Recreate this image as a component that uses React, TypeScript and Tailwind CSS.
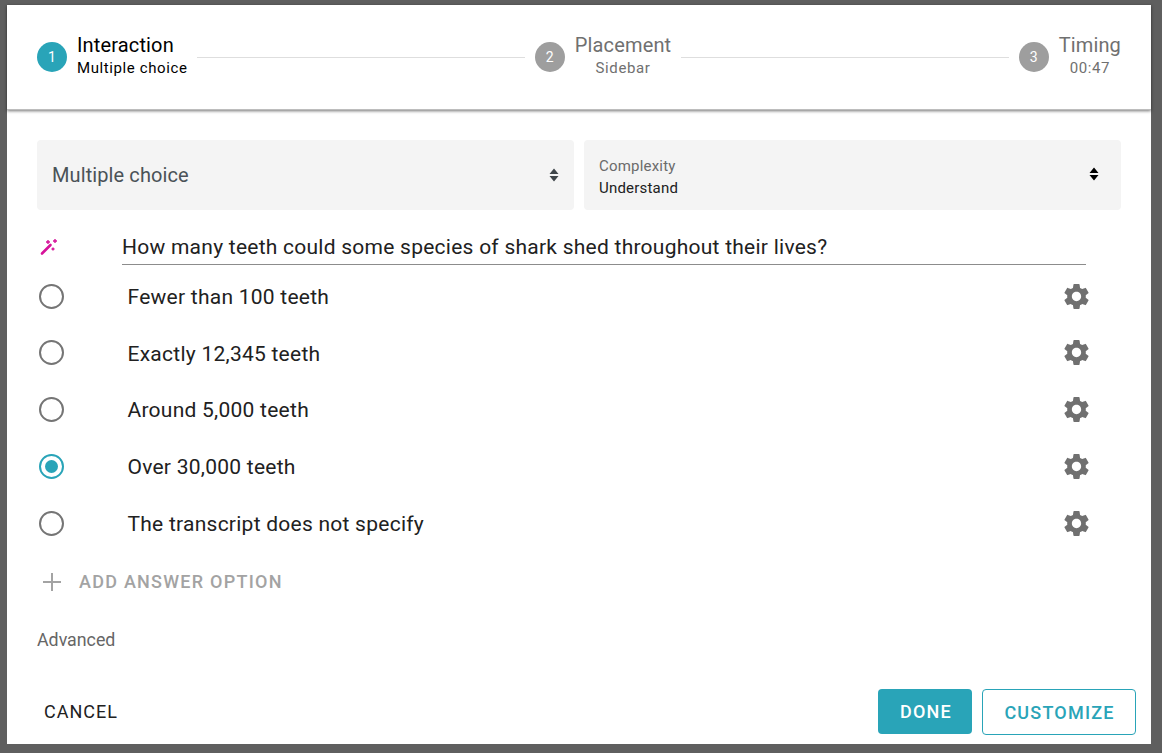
import { MdSettings } from "react-icons/md";

const options = [
  { label: "Fewer than 100 teeth", checked: false },
  { label: "Exactly 12,345 teeth", checked: false },
  { label: "Around 5,000 teeth", checked: false },
  { label: "Over 30,000 teeth", checked: true },
  { label: "The transcript does not specify", checked: false },
];

const SortArrows = ({ className }: { className: string }) => (
  <svg width="10" height="14" viewBox="0 0 10 14" className={className}>
    <path d="M5 0.5 L9.5 6 H0.5 Z M0.5 8 H9.5 L5 13.5 Z" fill="currentColor" />
  </svg>
);

const Step = ({ n, title, sub, active }: { n: number; title: string; sub: string; active?: boolean }) => (
  <div className="flex items-center gap-[10px]">
    <div
      className={`w-[30px] h-[30px] rounded-full flex items-center justify-center text-white text-sm ${
        active ? "bg-[#29a4b8]" : "bg-[#9e9e9e]"
      }`}
    >
      {n}
    </div>
    <div className={`flex flex-col mb-[4px] ${active ? "items-start text-black" : "items-center text-[#707070]"}`}>
      <span className="text-[20px] leading-[26px] tracking-[0.15px]">{title}</span>
      <span className="text-[15px] leading-[20px] tracking-[0.6px]">{sub}</span>
    </div>
  </div>
);

const Line = () => <div className="flex-1 h-px bg-[#dedede] mx-[10px]" />;

export default function App() {
  return (
    <div className="w-[1162px] h-[753px] bg-[#5f5f5f] pt-[5px] pl-[7px] pr-[11px] pb-[9px] font-['Roboto',sans-serif] overflow-hidden">
      <div className="h-full bg-white flex flex-col">
        <div className="h-[105px] shrink-0 px-[30px] flex items-center justify-between shadow-[0_1px_3px_rgba(0,0,0,0.55)] border-b border-[#bdbdbd]">
          <Step n={1} title="Interaction" sub="Multiple choice" active />
          <Line />
          <Step n={2} title="Placement" sub="Sidebar" />
          <Line />
          <Step n={3} title="Timing" sub="00:47" />
        </div>

        <div className="grid grid-cols-2 gap-[10px] px-[30px] pt-[30px]">
          <div className="h-[70px] rounded bg-[#f4f4f4] flex items-center justify-between px-[15px]">
            <span className="text-[20px] tracking-[0.1px] text-[#4a5257]">Multiple choice</span>
            <SortArrows className="text-[#3f4549]" />
          </div>
          <div className="h-[70px] rounded bg-[#f4f4f4] flex items-center justify-between pl-[15px] pr-[22px]">
            <div className="flex flex-col pt-[4px]">
              <span className="text-[15px] leading-[22px] tracking-[0.2px] text-[#6b6b6b]">Complexity</span>
              <span className="text-[15px] leading-[22px] tracking-[0.2px] text-[#212121]">Understand</span>
            </div>
            <SortArrows className="text-black mb-[2px]" />
          </div>
        </div>

        <div className="flex items-start pl-[33px] pr-[65px] mt-[19px]">
          <svg width="18" height="18" viewBox="0 0 18 18" className="mt-[9px] shrink-0">
            <path d="M2 15.5 L10.5 7" stroke="#d6139a" strokeWidth="2.6" strokeLinecap="round" fill="none" />
            <path
              d="M8 2V6M6 4H10M15 1V5M13 3H17M13 9.5V12.5M11.5 11H14.5"
              stroke="#d6139a"
              strokeWidth="1.4"
              fill="none"
            />
          </svg>
          <div className="flex-1 ml-[64px] h-[36px] border-b border-[#8c8c8c] text-[21px] leading-[36px] text-[#212121] tracking-[0.25px]">
            How many teeth could some species of shark shed throughout their lives?
          </div>
        </div>

        <div className="flex flex-col pl-[32px] pr-[59.5px] mt-[2.75px]">
          {options.map((o) => (
            <div key={o.label} className="flex items-center h-[56.75px]">
              <div
                className={`w-[25px] h-[25px] rounded-full border-2 flex items-center justify-center shrink-0 ${
                  o.checked ? "border-[#29a4b8]" : "border-[#757575]"
                }`}
              >
                {o.checked && <div className="w-[13px] h-[13px] rounded-full bg-[#29a4b8]" />}
              </div>
              <span className="ml-[63.5px] flex-1 pt-[3px] text-[21px] text-[#212121] tracking-[0.25px]">{o.label}</span>
              <MdSettings size={31} className="text-[#707070]" />
            </div>
          ))}
        </div>

        <div className="flex items-center pl-[33px] mt-[2.25px] h-[56px]">
          <svg width="24" height="24" viewBox="0 0 24 24" className="shrink-0">
            <path d="M12 3V21M3 12H21" stroke="#a3a3a3" strokeWidth="2" fill="none" />
          </svg>
          <span className="ml-[15px] text-[18px] font-medium tracking-[1.25px] text-[#a3a3a3]">ADD ANSWER OPTION</span>
        </div>

        <div className="pl-[30px] mt-[18px] text-[17.8px] leading-[24px] text-[#666666]">Advanced</div>

        <div className="mt-auto flex items-center justify-between pl-[37px] pr-[15px] pb-[9px]">
          <span className="mb-[2px] text-[18px] tracking-[1px] text-[#212121]">CANCEL</span>
          <div className="flex gap-[10px]">
            <button className="w-[94px] h-[45px] pl-[2px] rounded bg-[#29a4b8] text-white text-[18px] font-medium tracking-[1.2px]">
              DONE
            </button>
            <button className="w-[154px] h-[46px] pl-[1px] rounded border border-[#29a4b8] text-[#29a4b8] text-[18px] font-medium tracking-[1.2px]">
              CUSTOMIZE
            </button>
          </div>
        </div>
      </div>
    </div>
  );
}
